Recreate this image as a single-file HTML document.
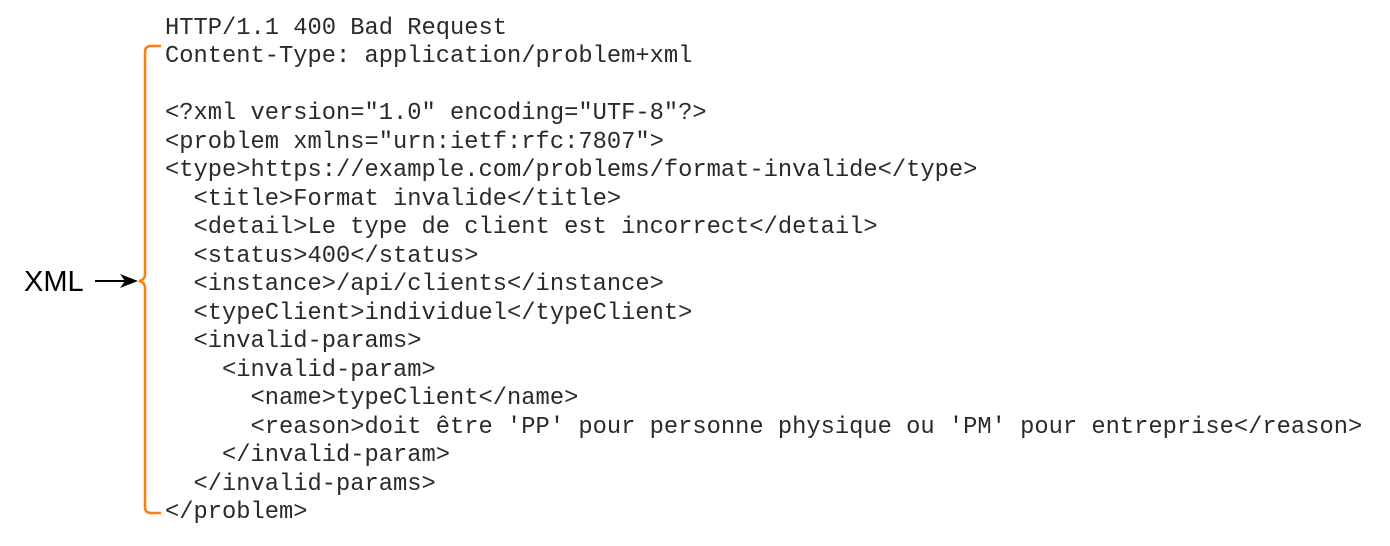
<!DOCTYPE html>
<html><head><meta charset="utf-8"><style>
html,body{margin:0;padding:0;background:#fff;width:1390px;height:546px;overflow:hidden;position:relative}
pre{position:absolute;left:165px;top:15px;margin:0;font-family:"Liberation Mono",monospace;font-size:23.75px;line-height:28.47px;color:#2a2a2a}
.xml{position:absolute;left:24px;top:266px;font-family:"Liberation Sans",sans-serif;font-size:29px;color:#000}
svg{position:absolute;left:0;top:0}
</style></head><body>
<svg width="1390" height="546">
<path d="M161 46 H151 Q145 46 145 52 V274 Q145 280 139 281 Q145 282 145 288 V507 Q145 513 151 513 H161" fill="none" stroke="#ff7f0e" stroke-width="2.5"/>
<line x1="95" y1="281" x2="128" y2="281" stroke="#000" stroke-width="2"/>
<path d="M138 281 L120 274 L125 281 L120 288 Z" fill="#000"/>
</svg>
<div class="xml">XML</div>
<pre>HTTP/1.1 400 Bad Request
Content-Type: application/problem+xml

&lt;?xml version="1.0" encoding="UTF-8"?&gt;
&lt;problem xmlns="urn:ietf:rfc:7807"&gt;
&lt;type&gt;https://example.com/problems/format-invalide&lt;/type&gt;
  &lt;title&gt;Format invalide&lt;/title&gt;
  &lt;detail&gt;Le type de client est incorrect&lt;/detail&gt;
  &lt;status&gt;400&lt;/status&gt;
  &lt;instance&gt;/api/clients&lt;/instance&gt;
  &lt;typeClient&gt;individuel&lt;/typeClient&gt;
  &lt;invalid-params&gt;
    &lt;invalid-param&gt;
      &lt;name&gt;typeClient&lt;/name&gt;
      &lt;reason&gt;doit être 'PP' pour personne physique ou 'PM' pour entreprise&lt;/reason&gt;
    &lt;/invalid-param&gt;
  &lt;/invalid-params&gt;
&lt;/problem&gt;</pre>
</body></html>
